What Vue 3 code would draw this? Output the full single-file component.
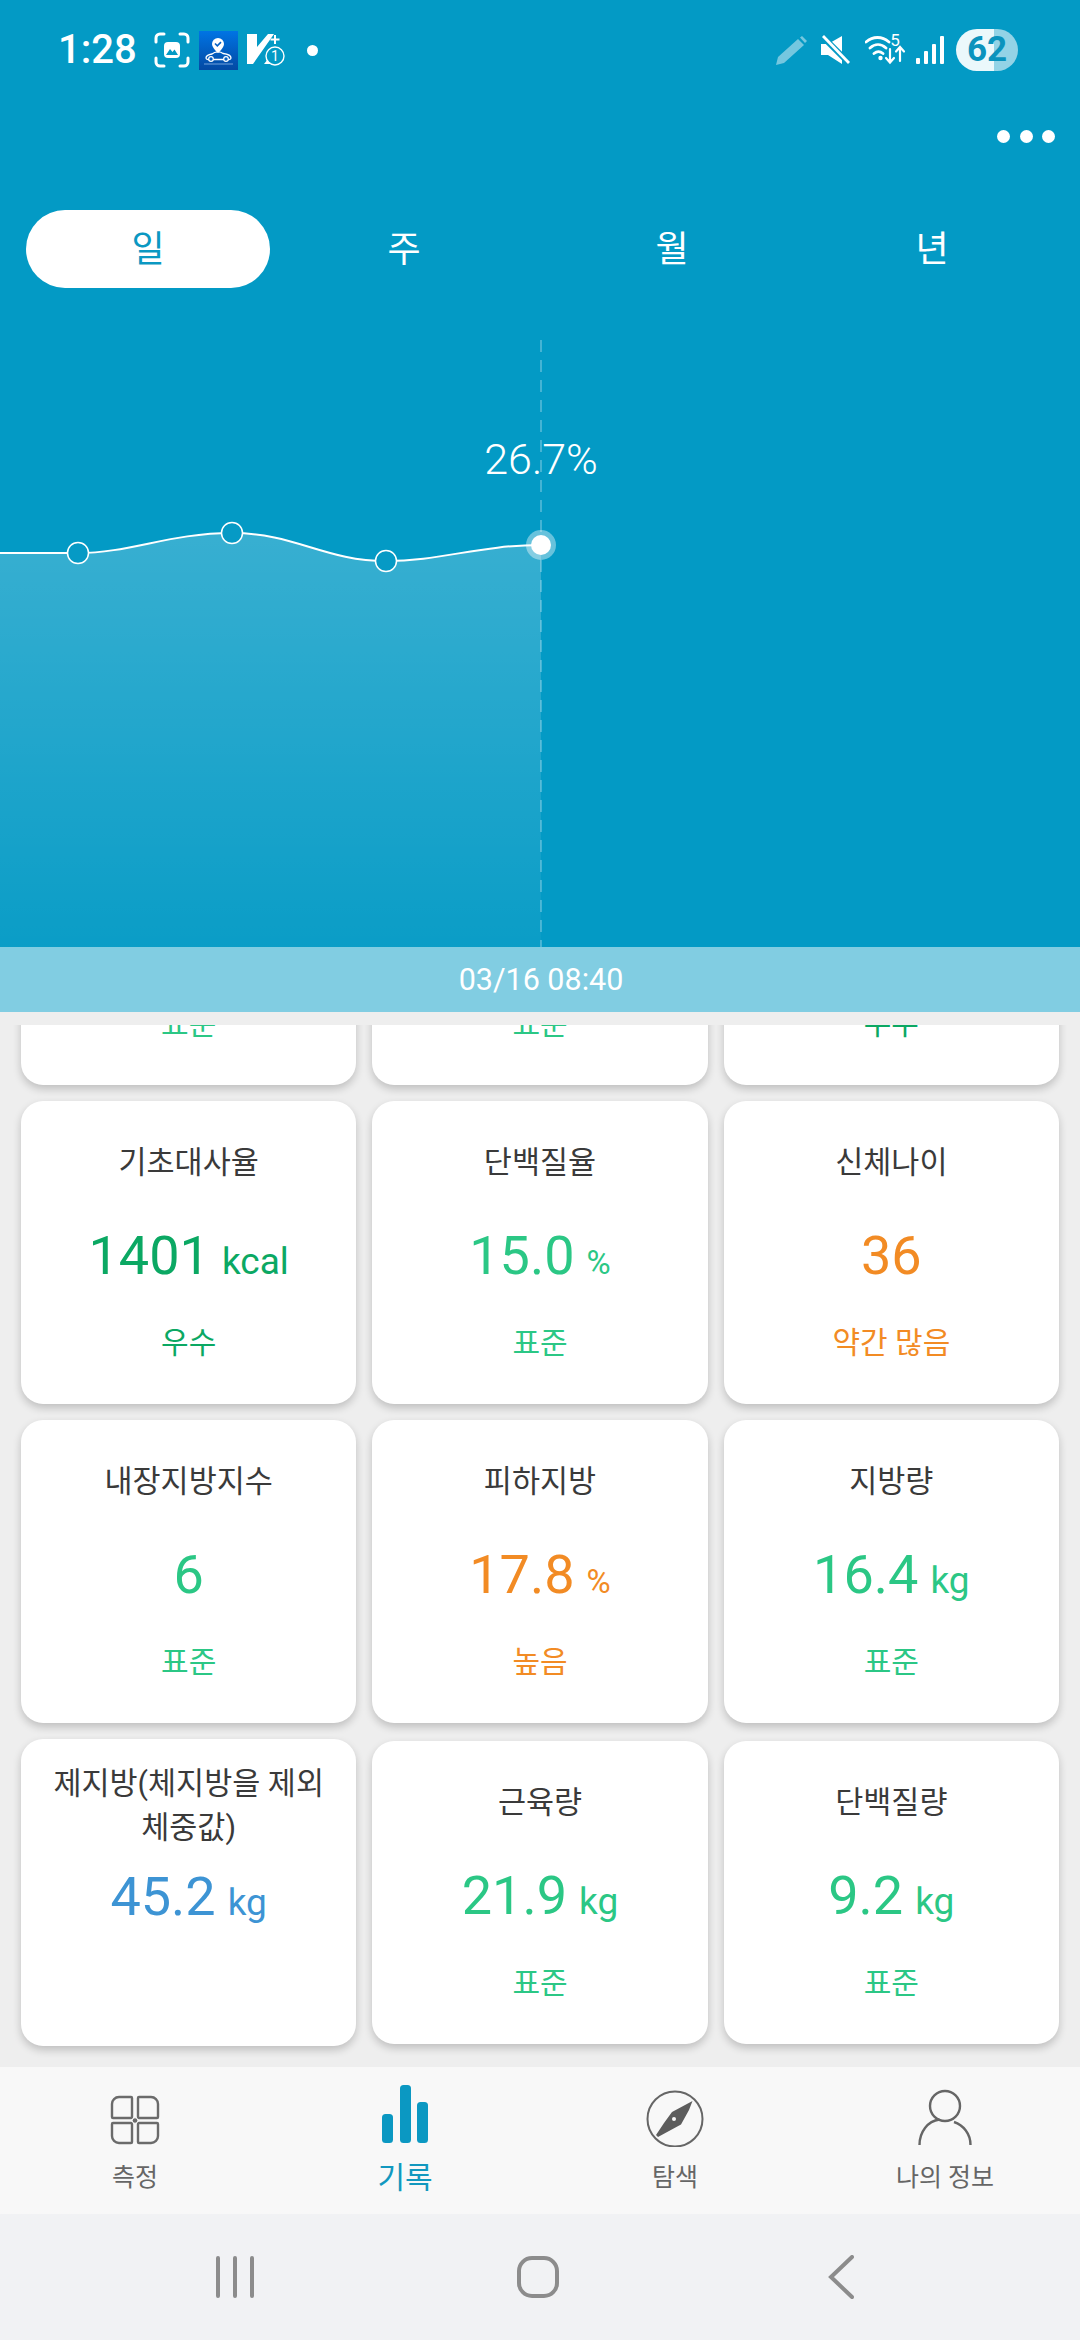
<template>
  <div class="screen">
    <header class="top">
      <!-- status bar -->
      <div class="status">
        <span class="time">1:28</span>
        <svg class="ic-shot" width="36" height="36" viewBox="0 0 36 36" fill="none" stroke="#fff" stroke-width="3" stroke-linecap="round">
          <path d="M2 10V6a4 4 0 0 1 4-4h4M26 2h4a4 4 0 0 1 4 4v4M34 26v4a4 4 0 0 1-4 4h-4M10 34H6a4 4 0 0 1-4-4v-4" />
          <rect x="10" y="10" width="16" height="16" rx="4" fill="#fff" stroke="none" />
          <path d="M12 23l4-6 2.500 3 2-2.500 3.500 5.500z" fill="#039ac5" stroke="none" />
        </svg>
        <svg class="ic-app" width="39" height="39" viewBox="0 0 39 39" fill="none">
          <defs>
            <linearGradient id="appBlue" x1="0" y1="0" x2="0" y2="1">
              <stop offset="0" stop-color="#0074e4" />
              <stop offset="1" stop-color="#0349a3" />
            </linearGradient>
          </defs>
          <rect width="39" height="39" fill="url(#appBlue)" />
          <path d="M19 7a6 6 0 0 1 6 6c0 4-6 9-6 9s-6-5-6-9a6 6 0 0 1 6-6z" fill="#fff" />
          <path d="M16 12.500l2.300 2.300 3.700-3.700" stroke="#0560c4" stroke-width="1.600" />
          <path d="M7 27c0-3 3-3.500 6-4 3-2.500 8-3 11-.5 4 .5 8 1.500 8 4.500 0 1-1 1.500-2 1.500H9c-1 0-2-.5-2-1.500z" stroke="#fff" stroke-width="1.300" />
          <circle cx="12" cy="28" r="2.300" fill="#0560c4" stroke="#fff" stroke-width="1.200" />
          <circle cx="27" cy="28" r="2.300" fill="#0560c4" stroke="#fff" stroke-width="1.200" />
          <path d="M5 33h29" stroke="#8fb6e6" stroke-width=".8" />
        </svg>
        <svg class="ic-v" width="40" height="34" viewBox="0 0 40 34" fill="none">
          <path d="M0 1h10v13L21 1h6L6 31H0z" fill="#fff" />
          <path d="M17 31l4-5-1-2 3 1v6z" fill="#fff" />
          <path d="M28 2v9M23.500 6.500h9" stroke="#fff" stroke-width="2" />
          <circle cx="28" cy="23" r="9" stroke="#fff" stroke-width="1.400" fill="#039ac5" />
          <text x="28" y="28" text-anchor="middle" class="ic-v-num">1</text>
        </svg>
        <span class="dot"></span>

        <div class="status-right">
          <svg width="33" height="31" viewBox="0 0 33 31" class="ic-pencil">
            <path d="M1 30l2-8L23 4l6 6L9 28z" fill="#fff" />
            <path d="M25 2.500l2-1.500 5 5-2 2z" fill="#fff" />
          </svg>
          <svg width="30" height="30" viewBox="0 0 30 30" class="ic-mute">
            <path d="M0 9h7l14-8v28L7 20H0z" fill="#fff" />
            <path d="M1 1l27 27" stroke="#039ac5" stroke-width="6" />
            <path d="M2 1l26 27" stroke="#fff" stroke-width="2.800" />
          </svg>
          <svg width="42" height="34" viewBox="0 0 42 34" class="ic-wifi" fill="none" stroke="#fff" stroke-linecap="round" stroke-width="2.800">
            <path d="M1 9c7-6 16-6 23 0M5 15c5-4.500 11-4.500 16 0M9 20.500c3-2.500 6-2.500 9 0" />
            <circle cx="15.500" cy="25" r="2.200" fill="#fff" stroke="none" />
            <text x="30" y="13" text-anchor="middle" class="ic-wifi-num">5</text>
            <path d="M25 16v12M21 25l4 4.500 4-4.500M35 28V15M31 18.500l4-4.500 4 4.500" stroke-width="2.200" />
          </svg>
          <div class="signal">
            <i v-for="h in signalBars" :key="h" :style="{ height: h + 'px' }"></i>
          </div>
          <div class="battery">62</div>
        </div>
      </div>

      <div class="more"><i></i><i></i><i></i></div>

      <div class="tabs">
        <div v-for="(t, i) in tabs" :key="t" class="tab" :class="{ active: i === 0 }">{{ t }}</div>
      </div>

      <!-- trend chart -->
      <svg class="chart" width="1080" height="659" viewBox="0 288 1080 659">
        <defs>
          <linearGradient id="areaFill" x1="0" y1="0" x2="0" y2="1">
            <stop offset="0" stop-color="#fff" stop-opacity=".21" />
            <stop offset="1" stop-color="#fff" stop-opacity=".03" />
          </linearGradient>
        </defs>
        <path :d="curve + ' V947 H0 Z'" fill="url(#areaFill)" />
        <line x1="541" y1="340" x2="541" y2="947" stroke="#fff" stroke-opacity=".35" stroke-width="1.500" stroke-dasharray="12 8" />
        <path :d="curve" fill="none" stroke="#fff" stroke-width="2" />
        <circle v-for="p in points" :key="p.x" :cx="p.x" :cy="p.y" r="10.500" fill="#069ac5" stroke="#fff" stroke-width="1.500" />
        <circle cx="541" cy="545" r="15" fill="#fff" fill-opacity=".4" />
        <circle cx="541" cy="545" r="10" fill="#fff" />
        <text x="541" y="474" text-anchor="middle" class="chart-label">26.7%</text>
      </svg>
    </header>

    <div class="date-bar">03/16 08:40</div>

    <main class="content">
      <div class="grid">
        <div v-for="c in cards" :key="c.title" class="card" :class="{ wrapped: c.wrapped }">
          <div class="card-title">{{ c.title }}</div>
          <div class="card-value" :class="c.tone">
            {{ c.value }}<span v-if="c.unit" class="unit" :class="{ pct: c.unit === '%' }">{{ c.unit }}</span>
          </div>
          <div v-if="c.status" class="card-status" :class="c.tone">{{ c.status }}</div>
        </div>
      </div>
    </main>

    <nav class="bottom-nav">
      <div class="nav-item">
        <svg width="50" height="64" viewBox="0 -12 50 64" fill="none" stroke="#6b6b6b" stroke-width="2.400">
          <path d="M21 2H9a7 7 0 0 0-7 7v13a1 1 0 0 0 1 1h18a1 1 0 0 0 1-1V3a1 1 0 0 0-1-1z" />
          <path d="M29 2h12a7 7 0 0 1 7 7v13a1 1 0 0 1-1 1H29a1 1 0 0 1-1-1V3a1 1 0 0 1 1-1z" />
          <path d="M21 48H9a7 7 0 0 1-7-7V29a1 1 0 0 1 1-1h18a1 1 0 0 1 1 1v18a1 1 0 0 1-1 1z" />
          <path d="M29 48h12a7 7 0 0 0 7-7V29a1 1 0 0 0-1-1H29a1 1 0 0 0-1 1v18a1 1 0 0 0 1 1z" />
          <circle cx="25" cy="25.500" r="2.800" fill="#6b6b6b" stroke="#f8f8f8" stroke-width="1" />
        </svg>
        <span>측정</span>
      </div>
      <div class="nav-item active">
        <svg width="46" height="64" viewBox="0 -2 46 64" fill="#0b98c2">
          <rect x="0" y="29" width="11" height="29" rx="3.500" />
          <rect x="18" y="0" width="11" height="58" rx="3.500" />
          <rect x="35" y="17" width="11" height="41" rx="3.500" />
        </svg>
        <span>기록</span>
      </div>
      <div class="nav-item">
        <svg width="58" height="64" viewBox="0 -7 58 64" fill="none">
          <circle cx="29" cy="29" r="27.500" stroke="#666" stroke-width="2" />
          <path d="M46.500 11L43 20 35 34.500 23 41 12 47l-2-2 8-12 8-11z" fill="#5d5d5d" />
          <circle cx="28" cy="29" r="2" fill="#f8f8f8" />
        </svg>
        <span>탐색</span>
      </div>
      <div class="nav-item">
        <svg width="54" height="64" viewBox="0 -6 54 64" fill="none" stroke="#666" stroke-width="2.400">
          <circle cx="27" cy="17" r="15" />
          <path d="M1.500 56c0-13 8-24 20-25.500M36 33c9 3 16.500 11.500 16.500 23" />
        </svg>
        <span>나의 정보</span>
      </div>
    </nav>

    <div class="sys-nav">
      <svg width="40" height="42" viewBox="0 0 40 42" stroke="#8c8c8c" stroke-width="4" stroke-linecap="round">
        <path d="M3 2v38M20 2v38M37 2v38" />
      </svg>
      <svg width="42" height="42" viewBox="0 0 42 42" fill="none" stroke="#8c8c8c" stroke-width="4">
        <rect x="2" y="2" width="38" height="38" rx="13" />
      </svg>
      <svg width="26" height="44" viewBox="0 0 26 44" fill="none" stroke="#8c8c8c" stroke-width="4" stroke-linecap="round">
        <path d="M24 2L3 22l21 20" />
      </svg>
    </div>
  </div>
</template>

<script setup>
const tabs = ['일', '주', '월', '년']
const signalBars = [6, 13, 20, 28]

const curve = 'M0 553 H78 C130 553 170 533 232 533 C295 533 325 561 386 561 C440 561 480 545 541 545'
const points = [
  { x: 78, y: 553 },
  { x: 232, y: 533 },
  { x: 386, y: 561 },
]

const cards = [
  { title: '체중', value: '61.6', unit: 'kg', status: '표준', tone: 'green' },
  { title: 'BMI', value: '22.1', unit: '', status: '표준', tone: 'green' },
  { title: '수분율', value: '53.1', unit: '%', status: '우수', tone: 'deep' },
  { title: '기초대사율', value: '1401', unit: 'kcal', status: '우수', tone: 'deep' },
  { title: '단백질율', value: '15.0', unit: '%', status: '표준', tone: 'green' },
  { title: '신체나이', value: '36', unit: '', status: '약간 많음', tone: 'orange' },
  { title: '내장지방지수', value: '6', unit: '', status: '표준', tone: 'green' },
  { title: '피하지방', value: '17.8', unit: '%', status: '높음', tone: 'orange' },
  { title: '지방량', value: '16.4', unit: 'kg', status: '표준', tone: 'green' },
  { title: '제지방(체지방을 제외 체중값)', value: '45.2', unit: 'kg', status: '', tone: 'blue', wrapped: true },
  { title: '근육량', value: '21.9', unit: 'kg', status: '표준', tone: 'green' },
  { title: '단백질량', value: '9.2', unit: 'kg', status: '표준', tone: 'green' },
]
</script>

<style>
html, body {
  margin: 0;
  background: #eeeeee;
}
</style>

<style scoped>
.screen {
  width: 1080px;
  height: 2340px;
  display: flex;
  flex-direction: column;
  overflow: hidden;
  background: #eeeeee;
  font-family: Roboto, "Noto Sans CJK KR", sans-serif;
}
.top {
  height: 947px;
  flex: none;
  background: #039ac5;
  display: flex;
  flex-direction: column;
}

/* status bar */
.status {
  height: 42px;
  padding: 29px 62px 0 58px;
  display: flex;
  align-items: center;
  color: #fff;
}
.time {
  width: 96px;
  font-size: 40px;
  font-weight: 500;
  line-height: 42px;
}
.ic-app { margin-left: 9px; }
.ic-v { margin-left: 9px; }
.ic-v-num {
  font-size: 14px;
  fill: #fff;
  font-family: Roboto, sans-serif;
}
.dot {
  width: 11px;
  height: 11px;
  border-radius: 50%;
  background: #fff;
  margin-left: 20px;
}
.status-right {
  margin-left: auto;
  display: flex;
  align-items: center;
}
.ic-pencil { opacity: .45; }
.ic-mute { margin-left: 13px; }
.ic-wifi { margin-left: 14px; }
.ic-wifi-num {
  font-size: 17px;
  fill: #fff;
  stroke: none;
  font-family: Roboto, sans-serif;
}
.signal {
  margin-left: 9px;
  height: 28px;
  display: flex;
  align-items: flex-end;
  gap: 4px;
}
.signal i {
  width: 4px;
  background: #fff;
  border-radius: 1px;
}
.battery {
  margin-left: 12px;
  width: 62px;
  height: 42px;
  border-radius: 21px;
  background: linear-gradient(90deg, #ebf8fb 38px, #93d3e6 38px);
  color: #0a93bd;
  font-size: 35px;
  font-weight: 700;
  line-height: 42px;
  text-align: center;
}

.more {
  margin-top: 59px;
  padding-right: 25px;
  display: flex;
  justify-content: flex-end;
  gap: 9.500px;
}
.more i {
  width: 13px;
  height: 13px;
  border-radius: 50%;
  background: #fff;
}

.tabs {
  margin-top: 67px;
  padding-left: 26px;
  display: grid;
  grid-template-columns: 244px 268px 268px 252px;
}
.tab {
  height: 78px;
  line-height: 81px;
  text-align: center;
  font-size: 36px;
  color: #fff;
}
.tab.active {
  background: #fff;
  border-radius: 39px;
  color: #0b98c2;
}

.chart {
  display: block;
  flex: none;
}
.chart-label {
  font-size: 43px;
  font-weight: 300;
  fill: #fff;
}

.date-bar {
  height: 65px;
  flex: none;
  background: #81cde2;
  color: #fff;
  font-size: 30.500px;
  line-height: 65px;
  text-align: center;
  padding-left: 2px;
}

/* metric cards, scrolled so only the tail of the first row shows */
.content {
  height: 1042px;
  flex: none;
  margin-top: 13px;
  overflow: hidden;
}
.grid {
  margin-top: -243px;
  padding: 0 21px;
  display: grid;
  grid-template-columns: repeat(3, 1fr);
  gap: 16px;
  align-items: center;
}
.card {
  height: 303px;
  box-sizing: border-box;
  padding: 40px 24px 0;
  background: #fff;
  border-radius: 22px;
  box-shadow: 0 4px 8px rgba(0, 0, 0, .2);
  text-align: center;
}
.card.wrapped {
  height: 307px;
  padding-top: 23px;
}
.card-title {
  font-size: 30.500px;
  line-height: 44px;
  color: #3a3a3a;
}
.card-value {
  margin-top: 41px;
  height: 60px;
  font-size: 54px;
  line-height: 60px;
  white-space: nowrap;
}
.wrapped .card-value { margin-top: 17px; }
.unit {
  margin-left: 12px;
  font-size: 37px;
}
.unit.pct { font-size: 33px; }
.card-status {
  margin-top: 35px;
  font-size: 30px;
  line-height: 44px;
}
.green { color: #2bc785; }
.deep { color: #0ba863; }
.orange { color: #f28b24; }
.blue { color: #3d94d4; }

/* bottom navigation */
.bottom-nav {
  height: 147px;
  flex: none;
  box-sizing: border-box;
  padding-top: 16px;
  background: #f8f8f8;
  display: grid;
  grid-template-columns: repeat(4, 270px);
}
.nav-item {
  display: flex;
  flex-direction: column;
  align-items: center;
  color: #666;
  font-size: 25px;
  line-height: 34px;
}
.nav-item svg { margin-bottom: 14px; }
.nav-item.active {
  color: #1298bf;
  font-size: 30px;
}

.sys-nav {
  height: 126px;
  flex: none;
  background: #f1f2f4;
  padding-left: 83px;
  display: grid;
  grid-template-columns: repeat(3, 303px);
  align-items: center;
  justify-items: center;
}
</style>
